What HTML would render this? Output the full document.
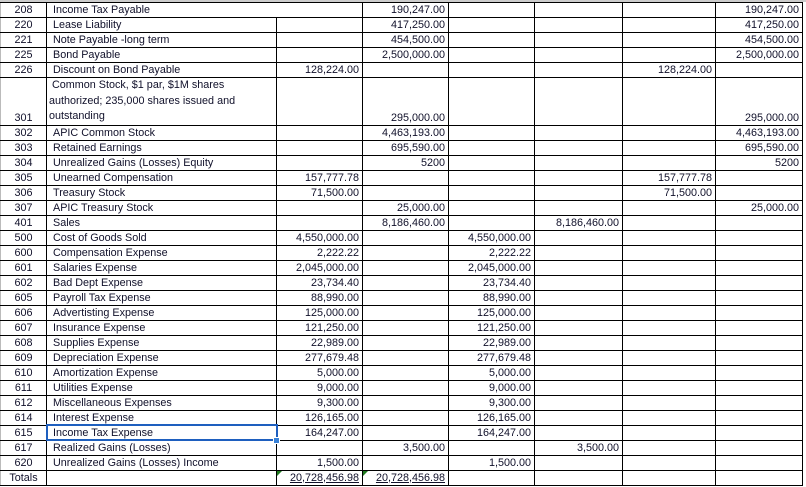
<!DOCTYPE html>
<html><head><meta charset="utf-8"><style>
body{margin:0;background:#fff;width:806px;height:487px;overflow:hidden;position:relative;font-family:"Liberation Sans",sans-serif;}
table{position:absolute;left:0;top:2px;border-collapse:collapse;table-layout:fixed;font-size:10.8px;color:#10102a;}
td{border:1px solid #000;height:14px;padding:0 3px 0 0;line-height:14px;white-space:nowrap;overflow:visible;text-align:right;}
td.a{text-align:center;padding:0;border-left:1px solid #bbb;}
td.d{text-align:left;padding-left:6px;overflow:visible;}
tr.tall td{height:45px;vertical-align:bottom;}
.sel{outline:2px solid #1e5fbf;outline-offset:-1px;position:relative;}
.sel:after{content:"";position:absolute;right:-4px;bottom:-4px;width:5px;height:5px;background:#3a82d8;border:1px solid #fff;}
.u{text-decoration:underline;position:relative;}
.tri:before{content:"";position:absolute;left:0;top:0;border-top:5px solid #1f7a1f;border-right:5px solid transparent;}
.top{position:absolute;left:0;top:0;width:806px;height:2px;background:#ccc;}
</style></head><body>
<div class="top"></div>
<table>
<colgroup><col style="width:46px"><col style="width:230px"><col style="width:86px"><col style="width:86px"><col style="width:86px"><col style="width:88px"><col style="width:93px"><col style="width:87px"></colgroup>
<tr><td class="a">208</td><td class="d" style="border-right:none">Income Tax Payable</td><td style="border-left:none"></td><td>190,247.00</td><td></td><td></td><td></td><td>190,247.00</td></tr>
<tr><td class="a">220</td><td class="d">Lease Liability</td><td></td><td>417,250.00</td><td></td><td></td><td></td><td>417,250.00</td></tr>
<tr><td class="a">221</td><td class="d">Note Payable -long term</td><td></td><td>454,500.00</td><td></td><td></td><td></td><td>454,500.00</td></tr>
<tr><td class="a">225</td><td class="d">Bond Payable</td><td></td><td>2,500,000.00</td><td></td><td></td><td></td><td>2,500,000.00</td></tr>
<tr><td class="a">226</td><td class="d">Discount on Bond Payable</td><td>128,224.00</td><td></td><td></td><td></td><td>128,224.00</td><td></td></tr>
<tr class="tall"><td class="a">301</td><td class="d" style="padding-left:2px;white-space:normal;line-height:15.5px">&nbsp;Common Stock, $1 par, $1M shares authorized; 235,000 shares issued and outstanding</td><td></td><td>295,000.00</td><td></td><td></td><td></td><td>295,000.00</td></tr>
<tr><td class="a">302</td><td class="d">APIC Common Stock</td><td></td><td>4,463,193.00</td><td></td><td></td><td></td><td>4,463,193.00</td></tr>
<tr><td class="a">303</td><td class="d">Retained Earnings</td><td></td><td>695,590.00</td><td></td><td></td><td></td><td>695,590.00</td></tr>
<tr><td class="a">304</td><td class="d">Unrealized Gains (Losses) Equity</td><td></td><td>5200</td><td></td><td></td><td></td><td>5200</td></tr>
<tr><td class="a">305</td><td class="d">Unearned Compensation</td><td>157,777.78</td><td></td><td></td><td></td><td>157,777.78</td><td></td></tr>
<tr><td class="a">306</td><td class="d">Treasury Stock</td><td>71,500.00</td><td></td><td></td><td></td><td>71,500.00</td><td></td></tr>
<tr><td class="a">307</td><td class="d">APIC Treasury Stock</td><td></td><td>25,000.00</td><td></td><td></td><td></td><td>25,000.00</td></tr>
<tr><td class="a">401</td><td class="d">Sales</td><td></td><td>8,186,460.00</td><td></td><td>8,186,460.00</td><td></td><td></td></tr>
<tr><td class="a">500</td><td class="d">Cost of Goods Sold</td><td>4,550,000.00</td><td></td><td>4,550,000.00</td><td></td><td></td><td></td></tr>
<tr><td class="a">600</td><td class="d">Compensation Expense</td><td>2,222.22</td><td></td><td>2,222.22</td><td></td><td></td><td></td></tr>
<tr><td class="a">601</td><td class="d">Salaries Expense</td><td>2,045,000.00</td><td></td><td>2,045,000.00</td><td></td><td></td><td></td></tr>
<tr><td class="a">602</td><td class="d">Bad Dept Expense</td><td>23,734.40</td><td></td><td>23,734.40</td><td></td><td></td><td></td></tr>
<tr><td class="a">605</td><td class="d">Payroll Tax Expense</td><td>88,990.00</td><td></td><td>88,990.00</td><td></td><td></td><td></td></tr>
<tr><td class="a">606</td><td class="d">Advertisting Expense</td><td>125,000.00</td><td></td><td>125,000.00</td><td></td><td></td><td></td></tr>
<tr><td class="a">607</td><td class="d">Insurance Expense</td><td>121,250.00</td><td></td><td>121,250.00</td><td></td><td></td><td></td></tr>
<tr><td class="a">608</td><td class="d">Supplies Expense</td><td>22,989.00</td><td></td><td>22,989.00</td><td></td><td></td><td></td></tr>
<tr><td class="a">609</td><td class="d">Depreciation Expense</td><td>277,679.48</td><td></td><td>277,679.48</td><td></td><td></td><td></td></tr>
<tr><td class="a">610</td><td class="d">Amortization Expense</td><td>5,000.00</td><td></td><td>5,000.00</td><td></td><td></td><td></td></tr>
<tr><td class="a">611</td><td class="d">Utilities Expense</td><td>9,000.00</td><td></td><td>9,000.00</td><td></td><td></td><td></td></tr>
<tr><td class="a">612</td><td class="d">Miscellaneous Expenses</td><td>9,300.00</td><td></td><td>9,300.00</td><td></td><td></td><td></td></tr>
<tr><td class="a">614</td><td class="d">Interest Expense</td><td>126,165.00</td><td></td><td>126,165.00</td><td></td><td></td><td></td></tr>
<tr><td class="a">615</td><td class="d sel">Income Tax Expense</td><td>164,247.00</td><td></td><td>164,247.00</td><td></td><td></td><td></td></tr>
<tr><td class="a">617</td><td class="d">Realized Gains (Losses)</td><td></td><td>3,500.00</td><td></td><td>3,500.00</td><td></td><td></td></tr>
<tr><td class="a">620</td><td class="d">Unrealized Gains (Losses) Income</td><td>1,500.00</td><td></td><td>1,500.00</td><td></td><td></td><td></td></tr>
<tr><td class="a">Totals</td><td class="d"></td><td class="u tri">20,728,456.98</td><td class="u tri">20,728,456.98</td><td></td><td></td><td></td><td></td></tr>
</table>
</body></html>
